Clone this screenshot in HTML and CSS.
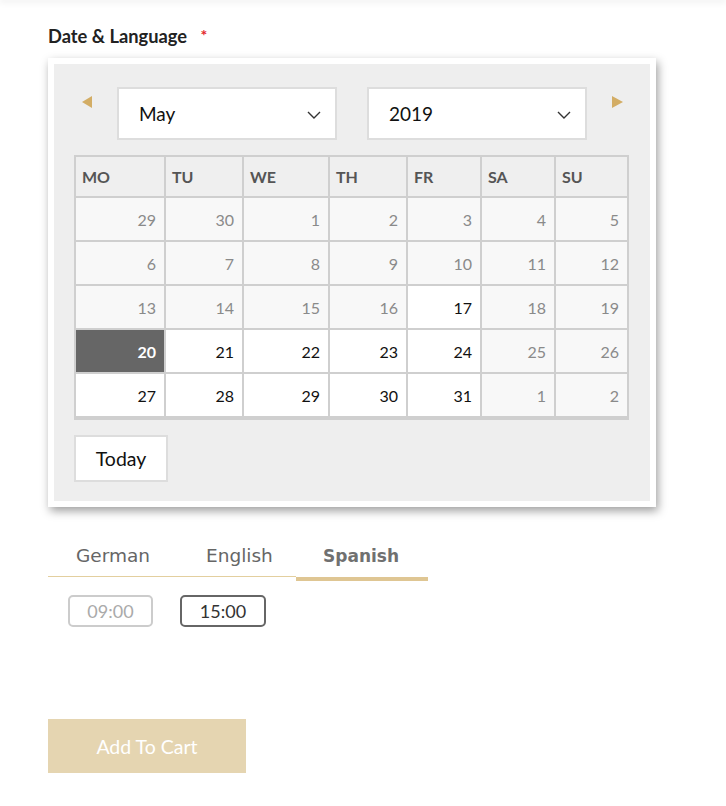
FILE: index.html
```html
<!DOCTYPE html>
<html lang="en">
<head>
<meta charset="utf-8">
<title>Date &amp; Language</title>
<link rel="stylesheet" href="styles.css">
</head>
<body>
<div class="topbar"></div>
<main class="page">
  <div class="field-label">Date &amp; Language <span class="req">*</span></div>

  <div class="picker">
    <div class="picker-inner">
      <div class="nav">
        <span class="arrow prev"></span>
        <div class="select"><span>May</span>
          <svg width="14" height="8" viewBox="0 0 14 8"><polyline points="1,1 7,7 13,1" fill="none" stroke="#333" stroke-width="1.4"/></svg>
        </div>
        <div class="select year"><span>2019</span>
          <svg width="14" height="8" viewBox="0 0 14 8"><polyline points="1,1 7,7 13,1" fill="none" stroke="#333" stroke-width="1.4"/></svg>
        </div>
        <span class="arrow next"></span>
      </div>

      <div class="cal">
        <div class="hd">MO</div><div class="hd">TU</div><div class="hd">WE</div><div class="hd">TH</div><div class="hd">FR</div><div class="hd">SA</div><div class="hd">SU</div>

        <div class="d">29</div><div class="d">30</div><div class="d">1</div><div class="d">2</div><div class="d">3</div><div class="d">4</div><div class="d">5</div>
        <div class="d">6</div><div class="d">7</div><div class="d">8</div><div class="d">9</div><div class="d">10</div><div class="d">11</div><div class="d">12</div>
        <div class="d">13</div><div class="d">14</div><div class="d">15</div><div class="d">16</div><div class="d on">17</div><div class="d">18</div><div class="d">19</div>
        <div class="d sel">20</div><div class="d on">21</div><div class="d on">22</div><div class="d on">23</div><div class="d on">24</div><div class="d">25</div><div class="d">26</div>
        <div class="d on">27</div><div class="d on">28</div><div class="d on">29</div><div class="d on">30</div><div class="d on">31</div><div class="d">1</div><div class="d">2</div>
      </div>

      <div class="today">Today</div>
    </div>
  </div>

  <div class="tabs">
    <div class="tab t1">German</div>
    <div class="tab t2">English</div>
    <div class="tab t3 active">Spanish</div>
  </div>

  <div class="times">
    <div class="time off">09:00</div>
    <div class="time">15:00</div>
  </div>

  <div class="cart">Add To Cart</div>
</main>
</body>
</html>
```

FILE: styles.css
```css
html, body {
  margin: 0;
  padding: 0;
  background: #fff;
}
body {
  font-family: Lato, "Liberation Sans", sans-serif;
  color: #111;
}
.topbar {
  height: 0;
  box-shadow: 0 0 7px 1px rgba(0, 0, 0, 0.16);
}
.page {
  padding: 23px 0 0 48px;
}
.field-label {
  font-size: 18.3px;
  line-height: 24px;
  font-weight: 700;
  color: #222;
  margin-bottom: 10px;
}
.req {
  color: #e3262a;
  font-size: 16px;
  font-weight: 700;
  margin-left: 9px;
  vertical-align: 2px;
}
.picker {
  width: 596px;
  border: 6px solid #fff;
  background: #eee;
  box-shadow: 2px 4px 9px rgba(0, 0, 0, 0.38);
}
.picker-inner {
  padding: 23px 20px 19px 20px;
}
.nav {
  display: flex;
  align-items: flex-start;
  height: 53px;
  margin-bottom: 15px;
}
.arrow {
  width: 0;
  height: 0;
  margin-top: 9px;
  border-top: 6px solid transparent;
  border-bottom: 6px solid transparent;
}
.arrow.prev {
  border-right: 10px solid #d3ad65;
  margin-left: 8px;
  margin-right: 25px;
}
.arrow.next {
  border-left: 11px solid #d3ad65;
  margin-left: 25px;
}
.select {
  box-sizing: border-box;
  width: 220px;
  height: 53px;
  background: #fff;
  border: 2px solid #ddd;
  display: flex;
  align-items: center;
  justify-content: space-between;
  padding: 0 14px 0 20px;
  font-size: 19px;
  color: #111;
}
.select.year {
  margin-left: 30px;
}
.select svg {
  margin-top: 2px;
}
.cal {
  display: grid;
  grid-template-columns: 88px 76px 84px 76px 72px 72px 71px;
  grid-template-rows: 39px repeat(5, 42px);
  gap: 2px;
  background: #cfcfcf;
  border: 2px solid #cfcfcf;
  border-bottom-width: 4px;
  width: 551px;
}
.hd {
  background: #efefef;
  color: #555;
  font-weight: 700;
  font-size: 16px;
  display: flex;
  align-items: center;
  padding-left: 6px;
}
.d {
  background: #f8f8f8;
  color: #8a8a8a;
  font-size: 16px;
  display: flex;
  align-items: center;
  justify-content: flex-end;
  padding-right: 8px;
}
.d.on {
  background: #fff;
  color: #111;
}
.d.sel {
  background: #666;
  color: #fff;
  font-weight: 700;
}
.today {
  box-sizing: border-box;
  margin-top: 15px;
  width: 94px;
  height: 47px;
  border: 2px solid #ddd;
  background: #fff;
  display: flex;
  align-items: center;
  justify-content: center;
  font-size: 19.5px;
  color: #111;
}
.tabs {
  display: flex;
  align-items: flex-start;
  margin-top: 29px;
  font-family: "DejaVu Sans", "Noto Sans", sans-serif;
  font-size: 18.5px;
  color: #666;
}
.tab {
  box-sizing: border-box;
  line-height: 24px;
  padding-top: 8px;
  padding-bottom: 8px;
  border-bottom: 1px solid #e3cf9f;
}
.t1 { width: 131px; padding-left: 28px; }
.t2 { width: 117px; padding-left: 27px; }
.t3 { width: 132px; padding-left: 27px; }
.tab.active {
  font-size: 17px;
  font-weight: 700;
  color: #707070;
  padding-bottom: 9px;
  border-bottom: 4px solid #dfc693;
}
.times {
  display: flex;
  gap: 27px;
  margin-top: 14px;
  margin-left: 20px;
  font-size: 18px;
}
.time {
  box-sizing: border-box;
  width: 86px;
  height: 32px;
  border: 2px solid #666;
  border-radius: 5px;
  display: flex;
  align-items: center;
  justify-content: center;
  color: #333;
}
.time.off {
  width: 85px;
  border-color: #ccc;
  color: #aaa;
}
.cart {
  margin-top: 92px;
  width: 198px;
  height: 54px;
  background: #e5d5b1;
  color: #fff;
  font-size: 19.5px;
  display: flex;
  align-items: center;
  justify-content: center;
}
```
